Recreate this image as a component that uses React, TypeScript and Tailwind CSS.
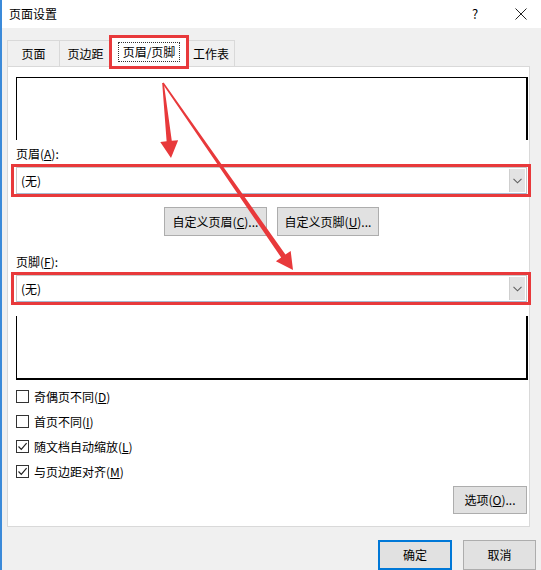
import React from 'react'

// ── Helpers ────────────────────────────────────────
const FONT = { fontFamily: '"Noto Sans CJK SC", "Noto Sans", sans-serif' }

type Pt = [number, number]

const arrowPoints = (s: Pt, t: Pt, headLen = 17, headHalf = 9, w0 = 0.8, w1 = 2.6) => {
  const dx = t[0] - s[0]
  const dy = t[1] - s[1]
  const len = Math.hypot(dx, dy)
  const ux = dx / len
  const uy = dy / len
  const nx = -uy
  const ny = ux
  const bx = t[0] - ux * headLen
  const by = t[1] - uy * headLen
  const pts: Pt[] = [
    [s[0] + nx * w0, s[1] + ny * w0],
    [bx + nx * w1, by + ny * w1],
    [bx + nx * headHalf, by + ny * headHalf],
    [t[0], t[1]],
    [bx - nx * headHalf, by - ny * headHalf],
    [bx - nx * w1, by - ny * w1],
    [s[0] - nx * w0, s[1] - ny * w0],
  ]
  return pts.map((p) => p.join(',')).join(' ')
}

// ── Small widgets ──────────────────────────────────
const RedBox = () => (
  <span className="pointer-events-none absolute -left-[5px] -right-[4px] -top-[3px] -bottom-[3px] border-[3px] border-[#e8393b]" />
)

const Select = () => (
  <div className="relative h-[27px] w-[511px]">
    <div className="flex h-full items-stretch border border-[#c9c9c9] border-b-[#a8b8d0] bg-white">
      <div className="flex flex-1 items-center pl-[4px] text-[12px] text-black">(无)</div>
      <div className="m-[1px] flex w-[16px] items-center justify-center bg-[#e3e3e3] border-l border-[#cfcfcf]">
        <svg width="9" height="6" viewBox="0 0 9 6">
          <path d="M0.5 0.8 L4.5 4.8 L8.5 0.8" fill="none" stroke="#606060" strokeWidth="1.1" />
        </svg>
      </div>
    </div>
    <RedBox />
  </div>
)

const Button = ({ children, className = '' }: { children: React.ReactNode; className?: string }) => (
  <div
    className={`flex items-center justify-center border border-[#adadad] bg-[#e1e1e1] text-[12px] text-black ${className}`}
  >
    {children}
  </div>
)

const Checkbox = ({ checked, children }: { checked?: boolean; children: React.ReactNode }) => (
  <div className="flex h-[25px] items-center gap-[5px]">
    <div className="flex h-[13px] w-[13px] items-center justify-center border border-[#333333] bg-white">
      {checked && (
        <svg width="11" height="11" viewBox="0 0 11 11">
          <path d="M1.5 5.5 L4.3 8.3 L9.6 2.2" fill="none" stroke="#222" strokeWidth="1.2" />
        </svg>
      )}
    </div>
    <span className="text-[12px] text-black">{children}</span>
  </div>
)

const Tab = ({ label, active, w }: { label: string; active?: boolean; w: string }) =>
  active ? (
    <div
      className={`relative z-10 -mb-px flex h-[31px] items-center justify-center border border-b-0 border-[#d9d9d9] bg-white ${w}`}
    >
      <span className="border border-dotted border-[#333] px-[4px] py-[2px] text-[12px] leading-[14px] text-black">
        {label}
      </span>
      <span className="pointer-events-none absolute -left-[3px] -right-[3px] -top-[2px] -bottom-[2px] border-[3px] border-[#e8393b]" />
    </div>
  ) : (
    <div
      className={`flex h-[26px] items-center justify-center border border-b-0 border-[#d9d9d9] bg-[#f0f0f0] text-[12px] text-black ${w}`}
    >
      {label}
    </div>
  )

// ── Page ───────────────────────────────────────────
export default function App() {
  return (
    <div
      className="relative flex h-[570px] w-[541px] flex-col overflow-hidden border-l-2 border-[#3b8ad9] bg-[#f0f0f0]"
      style={FONT}
    >
      {/* title bar */}
      <div className="flex h-[30px] items-center bg-white pl-[7px] text-[12px] text-black">
        <span className="flex-1">页面设置</span>
        <span className="w-[20px] text-center text-[13px]">?</span>
        <span className="ml-[26px] mr-[10px] flex w-[20px] justify-center">
          <svg width="12" height="12" viewBox="0 0 12 12">
            <path d="M0.5 0.5 L11.5 11.5 M11.5 0.5 L0.5 11.5" stroke="#222" strokeWidth="1" />
          </svg>
        </span>
      </div>

      <div className="flex flex-col pl-[5px] pr-[11px]">
        {/* tabs */}
        <div className="mt-[8px] flex h-[30px] items-end">
          <Tab label="页面" w="w-[53px]" />
          <Tab label="页边距" w="w-[53px] -ml-px" />
          <Tab label="页眉/页脚" w="w-[76px] -ml-px" active />
          <Tab label="工作表" w="w-[48px]" />
        </div>

        {/* panel */}
        <div className="flex h-[461px] flex-col border border-[#d9d9d9] bg-white pl-[8px] pr-[1px]">
          <div className="mt-[10px] h-[63px] w-[512px] border-l border-t border-r-2 border-black" />

          <div className="mt-[6px] h-[16px] text-[12px] leading-[16px] text-black">
            页眉(<u>A</u>):
          </div>
          <div className="mt-[5px]">
            <Select />
          </div>

          <div className="mt-[13px] flex gap-[10px] pl-[148px]">
            <Button className="h-[29px] w-[103px]">
              自定义页眉(<u>C</u>)...
            </Button>
            <Button className="h-[29px] w-[102px]">
              自定义页脚(<u>U</u>)...
            </Button>
          </div>

          <div className="mt-[18px] h-[16px] text-[12px] leading-[16px] text-black">
            页脚(<u>F</u>):
          </div>
          <div className="mt-[5px]">
            <Select />
          </div>

          <div className="mt-[14px] h-[64px] w-[512px] border-l border-b-2 border-r-2 border-black" />

          <div className="mt-[4px] flex flex-col">
            <Checkbox>
              奇偶页不同(<u>D</u>)
            </Checkbox>
            <Checkbox>
              首页不同(<u>I</u>)
            </Checkbox>
            <Checkbox checked>
              随文档自动缩放(<u>L</u>)
            </Checkbox>
            <Checkbox checked>
              与页边距对齐(<u>M</u>)
            </Checkbox>
          </div>

          <div className="mt-[2px] flex justify-end pr-[1px]">
            <Button className="h-[28px] w-[74px]">
              选项(<u>O</u>)...
            </Button>
          </div>
        </div>

        {/* bottom buttons */}
        <div className="mt-[13px] flex justify-end gap-[11px] -mr-[6px]">
          <div className="flex h-[30px] w-[74px] items-center justify-center border-2 border-[#0078d7] bg-[#e1e1e1] text-[12px] text-black">
            确定
          </div>
          <Button className="h-[30px] w-[73px]">取消</Button>
        </div>
      </div>

      {/* red arrows */}
      <svg className="pointer-events-none absolute left-0 top-0" width="541" height="570">
        <polygon points={arrowPoints([161, 83], [169, 158])} fill="#e8393b" />
        <polygon points={arrowPoints([161, 83], [291, 270])} fill="#e8393b" />
      </svg>
    </div>
  )
}
